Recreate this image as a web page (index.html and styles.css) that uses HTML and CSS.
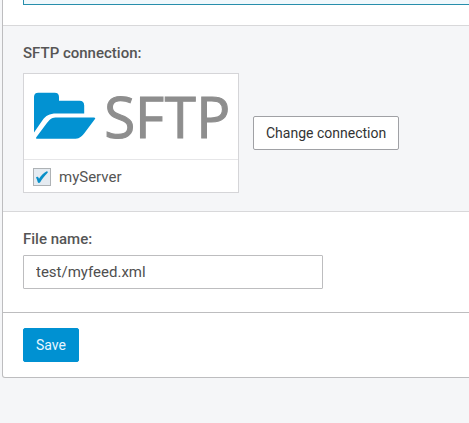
FILE: index.html
```html
<!DOCTYPE html>
<html lang="en">
<head>
<meta charset="utf-8">
<title>Feed settings</title>
<link rel="stylesheet" href="styles.css">
</head>
<body>
<main class="panel">
  <section class="intro"><div class="notice"></div></section>
  <section class="connection">
    <h2 class="label">SFTP connection:</h2>
    <div class="connection-row">
      <div class="card">
        <div class="card-logo">
          <svg width="214" height="85" viewBox="24 74 214 85" role="img" aria-label="SFTP">
            <g fill="#0292d2">
              <path d="M34 132.5V97Q34 92.7 38.3 92.7H54.7Q59 92.7 59 97V100.7H79.5Q84.2 100.7 84.2 105.4V113.5H56.5C49 113.5 46 115.7 42.5 120.2Z"/>
              <path d="M37.3 138.7Q35.2 138.7 36.5 136.9L47.1 122.8C50.2 118.7 52.5 117.5 57 117.5H93.8Q96.2 117.5 94.6 119.6L84.5 132.9C81 137.3 78.7 138.7 74 138.7Z"/>
            </g>
            <text class="logo-text" x="104.3 134.9 164.8 196.3" y="138.1">SFTP</text>
          </svg>
        </div>
        <div class="card-footer">
          <span class="checkbox" role="checkbox" aria-checked="true" aria-label="myServer">
            <svg width="16" height="16" viewBox="0 0 16 16"><path d="M2 8.4C2.9 7.3 4.3 7.5 5 9.7C7 6.7 9.4 4 12.8 2.2C13.9 2.5 14.2 3.2 13.4 4.1C10.5 7 8.2 9.9 6.2 13.2C5.4 14.3 4.2 14.2 3.7 13C3.3 11.4 2.9 9.9 2 8.4Z" fill="#078fc8"/></svg>
          </span>
          <span>myServer</span>
        </div>
      </div>
      <button class="button">Change connection</button>
    </div>
  </section>
  <section class="file">
    <label class="label" for="filename">File name:</label>
    <input class="input" id="filename" value="test/myfeed.xml">
  </section>
  <footer class="actions"><button class="button primary">Save</button></footer>
</main>
</body>
</html>
```
FILE: styles.css
```css
* { box-sizing: border-box; }
body {
  margin: 0;
  padding-left: 2px;
  background: #f5f6f8;
  color: #555;
  font: 14px/20px Roboto, "Liberation Sans", sans-serif;
  overflow: hidden;
}
.panel {
  width: 480px;
  height: 378px;
  background: #fff;
  border: solid #bdbdbf;
  border-width: 0 1px 1px;
  border-radius: 0 0 3px 3px;
  overflow: hidden;
}
.intro { height: 25px; padding-left: 20px; }
.notice {
  width: 500px;
  height: 5px;
  background: #f0f8fc;
  border: solid #278eac;
  border-width: 0 0 1px 1px;
}
.connection {
  height: 187px;
  padding: 17px 20px 0;
  background: #f5f6f8;
  border: solid #d8d8da;
  border-width: 1px 0;
}
.label {
  display: block;
  margin: 0;
  font-size: 15px;
  font-weight: 500;
  line-height: 20px;
}
.connection-row {
  display: flex;
  align-items: center;
  gap: 14px;
  margin-top: 10px;
}
.card {
  width: 216px;
  height: 120px;
  background: #fff;
  border: 1px solid #d5d5d8;
}
.card-logo { height: 85px; }
.card-logo svg { display: block; }
.logo-text {
  font: 400 56.5px "Open Sans", sans-serif;
  fill: #8e8e8e;
  stroke: #8e8e8e;
  stroke-width: 1.1px;
}
.card-footer {
  display: flex;
  align-items: center;
  gap: 8px;
  height: 33px;
  padding: 2px 9px 0;
  border-top: 1px solid #e6e6e8;
  font-size: 15px;
}
.checkbox {
  width: 18px;
  height: 18px;
  border: 1px solid #aeb2b5;
  background: #e5ebf1;
}
.checkbox svg { display: block; }
.button {
  height: 34px;
  padding: 0 12px;
  background: #fff;
  border: 1px solid #a0a1a5;
  border-radius: 2px;
  color: #333;
  font: 14px/20px Roboto, sans-serif;
  white-space: nowrap;
}
.connection .button { width: 146px; }
.file { height: 100px; padding: 17px 20px 0; }
.input {
  display: block;
  width: 300px;
  height: 34px;
  margin-top: 6px;
  padding: 0 12px;
  border: 1px solid #bdbdbf;
  border-radius: 1px;
  background: #fff;
  color: #4f4f4f;
  font: 15px Roboto, sans-serif;
}
.actions {
  height: 65px;
  padding: 15px 20px;
  border-top: 1px solid #bdbdbf;
}
.primary {
  width: 56px;
  background: #0091d2;
  border-color: #0091d2;
  color: #e8f7ff;
}
```
